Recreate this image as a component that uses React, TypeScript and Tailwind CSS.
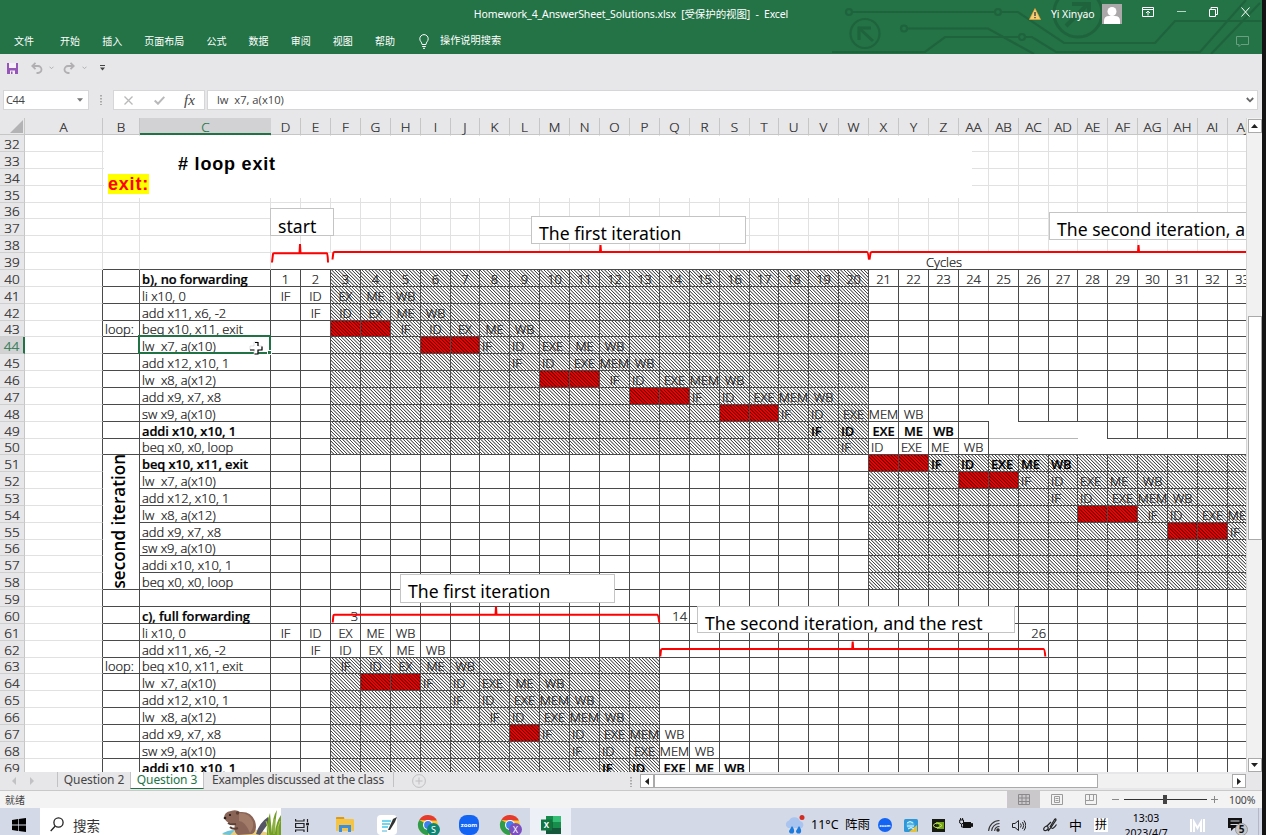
import React from "react";

type Align = "l" | "c" | "r";
type Entry = [col: string, text: string, align: Align];

const COLS = [
  "A","B","C","D","E","F","G","H","I","J","K","L","M","N","O","P","Q","R","S","T","U","V","W","X","Y","Z",
  "AA","AB","AC","AD","AE","AF","AG","AH","AI","AJ",
];
const FIRST_ROW = 32;
const LAST_ROW = 69;

const edges = [0, 25, 103, 140, 271];
for (let n = 1; n <= 33; n++) edges.push(Math.floor(270.6 + 29.9 * n) + 1);
const colTracks = edges.slice(1).map((e, i) => `${e - edges[i]}px`).join(" ");
const rowEdges: number[] = [];
for (let k = 0; k <= LAST_ROW - FIRST_ROW + 1; k++) rowEdges.push(Math.floor(134.7 + 16.85 * k) + 1);
const rowTracks = ["17px", ...rowEdges.slice(1).map((e, i) => `${e - rowEdges[i]}px`)].join(" ");

const ci = (c: string) => COLS.indexOf(c) + 2;
const ri = (r: number) => r - FIRST_ROW + 2;

const seq = (start: string, spec: string): Entry[] => {
  const s = COLS.indexOf(start);
  return spec.split(" ").map((p, i) => {
    const [t, a] = p.split("/");
    return [COLS[s + i], t, (a || "c") as Align];
  });
};

const rows: Record<number, Entry[]> = {
  39: [["Z", "Cycles", "c"]],
  40: Array.from({ length: 33 }, (_, i) => [COLS[i + 3], String(i + 1), "c"] as Entry),
  41: seq("D", "IF ID EX ME WB"),
  42: seq("E", "IF ID EX ME WB"),
  43: seq("H", "IF ID EX ME WB"),
  44: seq("K", "IF/l ID/l EXE/l ME WB"),
  45: seq("L", "IF/l ID/l EXE MEM WB"),
  46: seq("O", "IF ID/l EXE MEM WB"),
  47: seq("R", "IF/l ID/l EXE MEM WB"),
  48: seq("U", "IF/l ID/l EXE MEM WB"),
  49: seq("V", "IF/l ID/l EXE ME WB"),
  50: seq("W", "IF/l ID/l EXE/l ME/l WB"),
  51: seq("Z", "IF/l ID/l EXE/l ME/l WB/l"),
  52: seq("AC", "IF/l ID/l EXE/l ME/l WB"),
  53: seq("AD", "IF/l ID/l EXE MEM WB"),
  54: seq("AG", "IF ID/l EXE MEM"),
  55: seq("AJ", "IF/l"),
  60: [["F", "3", "r"], ["Q", "14", "r"]],
  61: [...seq("D", "IF ID EX ME WB"), ["AC", "26", "r"]],
  62: seq("E", "IF ID EX ME WB"),
  63: seq("F", "IF ID EX ME WB"),
  64: seq("I", "IF/l ID/l EXE/l ME WB"),
  65: seq("J", "IF/l ID/l EXE MEM WB"),
  66: seq("K", "IF ID/l EXE MEM WB"),
  67: seq("M", "IF/l ID/l EXE MEM WB"),
  68: seq("N", "IF/l ID/l EXE MEM WB"),
  69: seq("O", "IF/l ID/l EXE ME WB"),
};

const labels: Record<number, string> = {
  40: "b), no forwarding", 41: "li x10, 0", 42: "add x11, x6, -2", 43: "beq x10, x11, exit", 44: "lw  x7, a(x10)",
  45: "add x12, x10, 1", 46: "lw  x8, a(x12)", 47: "add x9, x7, x8", 48: "sw x9, a(x10)", 49: "addi x10, x10, 1",
  50: "beq x0, x0, loop", 51: "beq x10, x11, exit", 52: "lw  x7, a(x10)", 53: "add x12, x10, 1", 54: "lw  x8, a(x12)",
  55: "add x9, x7, x8", 56: "sw x9, a(x10)", 57: "addi x10, x10, 1", 58: "beq x0, x0, loop", 60: "c), full forwarding",
  61: "li x10, 0", 62: "add x11, x6, -2", 63: "beq x10, x11, exit", 64: "lw  x7, a(x10)", 65: "add x12, x10, 1",
  66: "lw  x8, a(x12)", 67: "add x9, x7, x8", 68: "sw x9, a(x10)", 69: "addi x10, x10, 1",
};
const BOLD_LABELS = [40, 49, 51, 60, 69];
const BOLD_STAGES = [49, 51, 69];

const hatches: [string, number, string, number][] = [
  ["F", 40, "W", 50],
  ["X", 51, "AJ", 58],
  ["F", 63, "P", 69],
];
const stalls: [string, string, number][] = [
  ["F", "G", 43], ["I", "J", 44], ["M", "N", 46], ["P", "Q", 47], ["S", "T", 48], ["X", "Y", 51],
  ["AA", "AB", 52], ["AE", "AF", 54], ["AH", "AI", 55], ["G", "H", 64], ["L", "L", 67],
];

function area(c1: string, r1: number, c2 = c1, r2 = r1): React.CSSProperties {
  return { gridColumn: `${ci(c1)} / ${ci(c2) + 1}`, gridRow: `${ri(r1)} / ${ri(r2) + 1}` };
}

function borderClass(col: string, r: number): string {
  const c = COLS.indexOf(col);
  const light = "border-[#e1e1e1]";
  if (col === "A") return `border-b border-r border-b-[#e1e1e1] ${r >= 40 ? "border-r-[#4a4a4a]" : "border-r-[#e1e1e1]"}`;
  if (r < 39) return `border-b border-r ${light}`;
  if (r === 39) return `border-b border-b-[#4a4a4a] ${c < 3 ? "border-r border-r-[#e1e1e1]" : ""}`;
  if (col === "B" && r >= 51 && r <= 57) return "border-r border-r-[#4a4a4a]";
  const dark = "border-[#4a4a4a]";
  if (r === 48 && col === "AA") return `border-b ${dark}`;
  if (r === 48 && col === "AB") return `border-r ${dark}`;
  if (r === 49 && c >= COLS.indexOf("AB") && c <= COLS.indexOf("AD")) return "border-b border-b-[#b5b5b5]";
  if (r === 49 && col === "AE") return `border-r ${dark}`;
  if (r === 50 && c > COLS.indexOf("AA")) return `border-b ${dark}`;
  return `border-b border-r ${dark}`;
}

const justify: Record<Align, string> = {
  l: "justify-start pl-[2px]",
  c: "justify-center",
  r: "justify-end pr-[2px]",
};

function Sheet() {
  const items: React.ReactNode[] = [];
  for (let r = FIRST_ROW; r <= LAST_ROW; r++) {
    const sel = r === 44;
    items.push(
      <div
        key={`h${r}`}
        style={{ gridColumn: 1, gridRow: ri(r) }}
        className={`flex items-end justify-center border-b border-r border-b-[#cfcfcf] text-[13.5px] leading-[13px] ${sel ? "border-r-2 border-r-[#217346] bg-[#d2d1d3] text-[#217346]" : "border-r-[#c6c6c6] bg-[#e7e6e8] text-[#222]"}`}
      >
        {r}
      </div>,
    );
    for (const col of COLS) {
      let text = "";
      let align: Align = "l";
      if (col === "C") text = labels[r] || "";
      if (col === "B" && (r === 43 || r === 63)) text = "loop:";
      const e = rows[r]?.find((x) => x[0] === col);
      if (e) {
        text = e[1];
        align = e[2];
      }
      const bold = (col === "C" && BOLD_LABELS.includes(r)) || (e && BOLD_STAGES.includes(r));
      items.push(
        <div
          key={`${col}${r}`}
          style={area(col, r)}
          className={`flex min-w-0 items-end whitespace-pre leading-[13px] ${borderClass(col, r)} ${justify[align]} ${bold ? "font-semibold tracking-[-0.08px] text-black" : "text-[#111]"}`}
        >
          {text}
        </div>,
      );
    }
  }
  return (
    <div className="relative h-[654px] w-[1246px] overflow-hidden bg-white font-['Open_Sans','Noto_Sans',sans-serif] text-[12.9px] font-light">
      <div className="grid w-max [-webkit-text-stroke:0.22px]" style={{ gridTemplateColumns: colTracks, gridTemplateRows: rowTracks }}>
        <div className="flex items-end justify-end border-b border-r border-[#c6c6c6] bg-[#e7e6e8] pb-[1px] pr-[1px]" style={{ gridColumn: 1, gridRow: 1 }}>
          <svg width="13" height="13" viewBox="0 0 13 13"><path d="M13 0V13H0Z" fill="#b3b3b5" /></svg>
        </div>
        {COLS.map((c) => (
          <div
            key={c}
            style={{ gridColumn: ci(c), gridRow: 1 }}
            className={`flex items-end justify-center whitespace-nowrap text-[13.5px] ${c === "C" ? "border-b-2 border-[#217346] bg-[#d2d1d3] leading-[12px] text-[#217346]" : "border-b border-r border-[#c6c6c6] bg-[#e7e6e8] leading-[14px] text-[#222]"}`}
          >
            {c}
          </div>
        ))}
        {hatches.map(([a, b, c, d]) => (
          <div
            key={a + b}
            style={area(a, b, c, d)}
            className="bg-[repeating-linear-gradient(45deg,#484848_0px,#484848_0.3px,#fff_0.85px,#fff_1.85px,#484848_2.383px)] bg-fixed"
          />
        ))}
        {stalls.map(([a, b, r]) => (
          <div
            key={a + r}
            style={area(a, r, b)}
            className="bg-[repeating-linear-gradient(45deg,#5a0000_0px,#5a0000_0.4px,#f40000_0.9px,#f40000_1.85px,#5a0000_2.383px)] bg-fixed"
          />
        ))}
        {items}
        <div style={area("B", 51, "B", 58)} className="flex items-center justify-center overflow-hidden pb-[2px] pr-[5px] [-webkit-text-stroke:0px]">
          <span className="rotate-180 whitespace-nowrap text-[17.1px] font-semibold leading-none text-black [writing-mode:vertical-rl]">second iteration</span>
        </div>
        <div style={area("C", 44)} className="relative -ml-[2px] -mt-[2px] border-2 border-[#217346]">
          <span className="absolute -bottom-[3px] -right-[3px] size-[5px] border border-white bg-[#217346]" />
          <svg className="absolute right-[6px] top-[4px]" width="14" height="14" viewBox="0 0 14 14">
            <path d="M5 1h4v4h4v4H9v4H5V9H1V5h4Z" fill="#fff" stroke="#ccc" strokeWidth="0.6" />
            <path d="M1 9H5.500M5.500 13H9V9H13V5.500M9 5V1.500H6" fill="none" stroke="#000" strokeWidth="1.2" />
          </svg>
        </div>
      </div>

      <div className="absolute left-[104px] top-[18px] flex h-[62px] w-[868px] flex-col items-start bg-white font-['Liberation_Sans',sans-serif] text-[18px] font-bold tracking-[0.8px] text-black">
        <span className="ml-[74px] mt-[18px] leading-[20px]"># loop exit</span>
        <span className="ml-[4px] bg-[#ffff00] leading-[20px] text-[#ff0000]">exit:</span>
      </div>
      <Note className="left-[270px] top-[90px] h-[28px] w-[64px] pt-[6px]">start</Note>
      <Note className="left-[531px] top-[98px] h-[28px] w-[215px] pt-[5px]">The first iteration</Note>
      <Note className="left-[1049px] top-[94px] h-[28px] w-[320px] pt-[5px]">The second iteration, and the rest</Note>
      <Note className="left-[400px] top-[456px] h-[29px] w-[215px] pt-[5px]">The first iteration</Note>
      <Note className="left-[697px] top-[488px] h-[27px] w-[318px] pt-[5px]">The second iteration, and the rest</Note>
      <svg className="absolute left-0 top-0" width="1246" height="654" viewBox="0 118 1246 654" fill="none" stroke="#ff0000" strokeWidth="2">
        <path d="M272 262.500L273 254Q273 253.300 274 253.300H299.500L300 244L300.500 253.300H327Q327.700 253.500 328 262.500" />
        <path d="M332.500 259.500L333.300 253Q333.500 252 334.500 252H600L600.500 245L601 252H867Q868 252 869 259.500" />
        <path d="M869.500 259.500L870.500 253Q870.700 252 872 252H1138L1138.500 245L1139 252H1260" />
        <path d="M332.700 622.500L333.400 615.500Q333.500 614.700 334.500 614.700H495.500L496 606.500L496.500 614.700H657.500Q658.300 614.700 659.300 622.500" />
        <path d="M660.300 656.500L661 650Q661.300 649 662.300 649H852.200L852.700 641.500L853.200 649H1043.500Q1044.700 649 1045.300 656.500" />
      </svg>
    </div>
  );
}

function Note({ className, children }: { className: string; children: React.ReactNode }) {
  return (
    <div className={`absolute overflow-hidden whitespace-nowrap border border-[#c4c4c4] bg-white pl-[7px] font-['Noto_Sans',sans-serif] text-[17.6px] font-normal leading-[22px] text-black ${className}`}>
      {children}
    </div>
  );
}

const TABS = ["开始", "插入", "页面布局", "公式", "数据", "审阅", "视图", "帮助"];

function Header() {
  return (
    <header className="relative h-[54px] bg-[#237346] text-white">
      <svg className="absolute right-0 top-0" width="430" height="54" viewBox="832 0 430 54" fill="none" stroke="#1f633d" strokeWidth="2.2">
        <circle cx="849" cy="12" r="3" /><path d="M852 12H995" /><circle cx="998" cy="12" r="3" />
        <path d="M1001 12H1018L1064 43H1155L1175 21H1262" />
        <circle cx="865" cy="33.500" r="14.500" /><path d="M859 40V28H871M860 29L873 41" strokeWidth="3" />
        <circle cx="904" cy="28.500" r="3" /><path d="M907 28.500H988L1034 54" />
        <path d="M832 52H925L945 37H1019M1025 37H1032L1056 52H1200L1246 0" /><circle cx="1022" cy="37" r="3" />
        <circle cx="1078" cy="13" r="24" strokeWidth="3" /><path d="M1066 26L1088 4M1072 4H1089V20" strokeWidth="4" />
        <path d="M1211 54L1260 3" />
      </svg>
      <div className="relative flex h-[28px] items-center">
        <div className="flex-1 pl-[12px]" />
        <div className="whitespace-pre pt-[1px] font-['Noto_Sans','Noto_Sans_CJK_SC',sans-serif] text-[10.5px] tracking-[-0.11px]">Homework_4_AnswerSheet_Solutions.xlsx  [受保护的视图]  -  Excel</div>
        <div className="flex flex-1 items-center justify-end pr-[12px]">
          <svg width="12" height="12" viewBox="0 0 12 12"><path d="M6 .5L11.600 11.500H.4Z" fill="#f7cf72" stroke="#e9a33b" strokeWidth=".7" /><path d="M6 4V8M6 9V10.300" stroke="#333" strokeWidth="1.300" /></svg>
          <span className="ml-[10px] w-[44px] whitespace-nowrap pt-[1px] font-['Noto_Sans',sans-serif] text-[10.5px] tracking-[-0.1px]">Yi Xinyao</span>
          <svg className="ml-[7px]" width="20" height="20" viewBox="0 0 20 20"><path d="M0 0H20V20H0Z" fill="#aaa8a9" /><circle cx="10" cy="7.500" r="4.500" fill="#fff" /><path d="M2 20V17Q2 12 7 12H13Q18 12 18 17V20Z" fill="#fff" /></svg>
          <svg className="-mt-[5px] ml-[20px]" width="12" height="10" viewBox="0 0 12 10" fill="none" stroke="#fff"><path d="M.5.5H11.500V9.500H.5ZM.5 2.500H11.500M6 8.500V4M4 6L6 4L8 6" /></svg>
          <svg className="-mt-[7px] ml-[23px]" width="9" height="10" viewBox="0 0 9 10" stroke="#b9d5c5"><path d="M0 5.500H9" /></svg>
          <svg className="-mt-[5px] ml-[23px]" width="9" height="10" viewBox="0 0 9 10" fill="none" stroke="#fff"><path d="M.5 2.500H6.500V9.500H.5ZM2 2V.5H8.500V7.500H7" /></svg>
          <svg className="-mt-[5px] ml-[23px]" width="9" height="10" viewBox="0 0 9 10" fill="none" stroke="#fff"><path d="M.5.5L8.500 9.500M8.500.5L.5 9.500" /></svg>
        </div>
      </div>
      <div className="relative flex h-[26px] items-center pb-[2px] pl-[14px] pr-[13px] font-['Noto_Sans_CJK_SC',sans-serif] text-[10px]">
        <span className="mr-[26px]">文件</span>
        <nav className="flex gap-[22.15px]">{TABS.map((t) => <span key={t}>{t}</span>)}</nav>
        <svg className="ml-[24px] mr-[11px] mt-[2px]" width="10" height="15" viewBox="0 0 10 15" fill="none" stroke="#fff"><path d="M3 10.500C3 8 .8 7.500.8 4.800A4.200 4.200 0 0 1 9.200 4.800C9.200 7.500 7 8 7 10.500ZM3.200 12.500H6.800M4 14.300H6" /></svg>
        <span className="text-[10.2px]">操作说明搜索</span>
        <svg className="ml-auto mt-[2px]" width="13" height="11" viewBox="0 0 13 11" fill="none" stroke="#6a9f80"><path d="M.5.5H12.500V8.500H5L3 10.500V8.500H.5Z" /></svg>
      </div>
    </header>
  );
}

function QuickAccess() {
  return (
    <div className="flex h-[36px] items-center pb-[8px] pl-[7px]">
      <svg width="11" height="11" viewBox="0 0 11 11"><path d="M0 0H11V11H0Z" fill="#9457b8" /><path d="M2 0H9V5H2Z" fill="#f4effa" /><path d="M3 7.500H8V11H3Z" fill="#f4effa" /><path d="M4 8.500H5.500V11H4Z" fill="#9457b8" /></svg>
      <svg className="ml-[13px]" width="12" height="12" viewBox="0 0 12 12" fill="none" stroke="#b1afb2" strokeWidth="1.800"><path d="M4.500.8L1.200 4L4.500 7.200M1.200 4H7A3.500 3.500 0 0 1 7 11H5.500" /></svg>
      <Chevron className="ml-[6px]" />
      <svg className="ml-[9px]" width="12" height="12" viewBox="0 0 12 12" fill="none" stroke="#b1afb2" strokeWidth="1.800"><path d="M7.500.8L10.800 4L7.500 7.200M10.800 4H5A3.500 3.500 0 0 0 5 11H6.500" /></svg>
      <Chevron className="ml-[7px]" />
      <svg className="ml-[13px]" width="5" height="6" viewBox="0 0 5 6"><path d="M0 .5H5" stroke="#444" /><path d="M0 2.500H5L2.500 5.500Z" fill="#444" /></svg>
    </div>
  );
}

function Chevron({ className }: { className: string }) {
  return <svg className={className} width="5" height="4" viewBox="0 0 5 4" fill="none" stroke="#b1afb2"><path d="M.5.7L2.500 2.700L4.500.7" /></svg>;
}

function FormulaBar() {
  return (
    <div className="flex h-[28px] items-start pl-[3px] font-['Open_Sans','Noto_Sans',sans-serif] text-[11px] text-[#444]">
      <div className="flex h-[20px] w-[86px] items-center justify-between border border-[#d6d5d7] bg-white pl-[2px] pr-[5px]">
        <span className="text-[11px] tracking-[-0.4px]">C44</span>
        <svg width="6" height="4" viewBox="0 0 6 4"><path d="M0 .3H6L3 3.700Z" fill="#777" /></svg>
      </div>
      <svg className="ml-[11px] mt-[5px]" width="2" height="10" viewBox="0 0 2 10" fill="#aaa"><path d="M0 0H2V1.500H0ZM0 3H2V4.500H0ZM0 6H2V7.500H0ZM0 9H2V10H0Z" /></svg>
      <div className="ml-[11px] flex h-[20px] w-[92px] items-center border border-[#d6d5d7] bg-white pl-[10px]">
        <svg width="9" height="9" viewBox="0 0 9 9" stroke="#b9b8ba" strokeWidth="1.300"><path d="M.5.5L8.500 8.500M8.500.5L.5 8.500" /></svg>
        <svg className="ml-[21px]" width="11" height="9" viewBox="0 0 11 9" fill="none" stroke="#b9b8ba" strokeWidth="2"><path d="M.7 4.500L4 7.700L10.300.8" /></svg>
        <span className="ml-[19px] font-['Liberation_Serif',serif] text-[15px] italic leading-none">fx</span>
      </div>
      <div className="ml-[2px] flex h-[20px] w-[1051px] items-center justify-between border border-[#d6d5d7] bg-white pl-[9px] pr-[3px]">
        <span className="whitespace-pre text-[11.2px]">lw  x7, a(x10)</span>
        <svg width="8" height="6" viewBox="0 0 8 6" fill="none" stroke="#666" strokeWidth="1.800"><path d="M.8 1L4 4.300L7.200 1" /></svg>
      </div>
    </div>
  );
}

function VScroll() {
  return (
    <div className="flex h-[654px] w-[16px] flex-col items-center border-l border-[#d5d5d5] bg-[#f1f1f1] pt-[1px]">
      <div className="flex h-[14px] w-[14px] items-center justify-center border border-[#aaa] bg-white"><svg width="7" height="4" viewBox="0 0 7 4"><path d="M0 4L3.500 0L7 4Z" fill="#222" /></svg></div>
      <div className="mt-[183px] h-[224px] w-[14px] border border-[#aaa] bg-white" />
      <div className="mt-auto flex h-[14px] w-[14px] items-center justify-center border border-[#aaa] bg-white"><svg width="7" height="4" viewBox="0 0 7 4"><path d="M0 0L3.500 4L7 0Z" fill="#222" /></svg></div>
    </div>
  );
}

function SheetTabs() {
  return (
    <div className="flex h-[19px] items-start border-b border-[#c9c9c9] font-['Noto_Sans',sans-serif] text-[12px] leading-[16px] text-[#444]">
      <svg className="ml-[12px] mt-[5px]" width="22" height="8" viewBox="0 0 22 8" fill="#c2c1c3"><path d="M4 0V8L0 4ZM18 0V8L22 4Z" /></svg>
      <span className="ml-[23px] h-[15px] w-px bg-[#c2c1c3]" />
      <span className="w-[72px] text-center tracking-[-0.1px]">Question 2</span>
      <span className="h-[17px] w-[74px] border-b border-l border-r border-b-[#217346] border-l-[#c2c1c3] border-r-[#c2c1c3] bg-white text-center tracking-[-0.1px] text-[#217346]">Question 3</span>
      <span className="w-[189px] whitespace-nowrap pl-[8px] tracking-[-0.2px]">Examples discussed at the class</span>
      <span className="h-[15px] w-px bg-[#c2c1c3]" />
      <svg className="ml-[18px] mt-[2px]" width="14" height="14" viewBox="0 0 14 14" fill="none" stroke="#c0bfc1"><circle cx="7" cy="7" r="6.400" /><path d="M7 3.500V10.500M3.500 7H10.500" /></svg>
      <svg className="ml-[204px] mt-[5px]" width="2" height="10" viewBox="0 0 2 10" fill="#aaa"><path d="M0 0H2V1.500H0ZM0 3H2V4.500H0ZM0 6H2V7.500H0ZM0 9H2V10H0Z" /></svg>
      <div className="ml-[8px] mt-[2px] flex h-[14px] w-[606px] bg-[#f1f1f1]">
        <div className="flex w-[14px] items-center justify-center border border-[#aaa] bg-white"><svg width="4" height="7" viewBox="0 0 4 7"><path d="M4 0V7L0 3.500Z" fill="#222" /></svg></div>
        <div className="w-[444px] border border-[#aaa] bg-white" />
        <div className="ml-auto flex w-[14px] items-center justify-center border border-[#aaa] bg-white"><svg width="4" height="7" viewBox="0 0 4 7"><path d="M0 0V7L4 3.500Z" fill="#222" /></svg></div>
      </div>
    </div>
  );
}

function StatusBar() {
  return (
    <div className="flex h-[17px] items-center bg-[#f3f3f3] pl-[5px] pr-[6px] font-['Noto_Sans','Noto_Sans_CJK_SC',sans-serif] text-[10px] leading-[16px] text-[#444]">
      <span>就绪</span>
      <div className="ml-auto flex h-full w-[33px] items-center justify-center bg-[#cac8cb]"><svg width="12" height="11" viewBox="0 0 12 11" fill="none" stroke="#8b898c"><path d="M.5.5H11.500V10.500H.5ZM.5 4H11.500M.5 7.500H11.500M4 .5V10.500M8 .5V10.500" /></svg></div>
      <svg className="ml-[11px]" width="12" height="11" viewBox="0 0 12 11" fill="none" stroke="#9b9b9b"><path d="M.5.5H11.500V10.500H.5ZM3.500 2.500H8.500V8.500H3.500ZM4.500 4.500H7.500M4.500 6.500H7.500" /></svg>
      <svg className="ml-[22px]" width="12" height="11" viewBox="0 0 12 11" fill="none" stroke="#9b9b9b"><path d="M.5.5H11.500V10.500H.5ZM4.500.5V6.500H.5M4.500 6.500H8.500V.5" /></svg>
      <svg className="ml-[15px]" width="107" height="11" viewBox="0 0 107 11"><path d="M0 5.500H7M99 5.500H106M102.500 2V9" stroke="#888" /><path d="M12 5.500H95" stroke="#333" /><path d="M51 1H55V10H51Z" fill="#444" /></svg>
      <span className="ml-[10px] w-[27px] whitespace-nowrap text-[10.5px] tracking-[-0.1px]">100%</span>
    </div>
  );
}

function ChromeIcon({ letter, color }: { letter: string; color: string }) {
  return (
    <svg width="24" height="24" viewBox="0 0 24 24">
      <circle cx="11" cy="11" r="10" fill="#fbc52d" />
      <path d="M11 11L2.300 6A10 10 0 0 0 11 21Z" fill="#2e9c4b" />
      <path d="M2.300 6A10 10 0 0 1 20 6.500H11Z" fill="#e53b2e" />
      <circle cx="11" cy="11" r="5" fill="#fff" /><circle cx="11" cy="11" r="3.900" fill="#3f7ff0" />
      <circle cx="16.500" cy="15.500" r="6.500" fill={color} />
      <text x="16.500" y="18.800" textAnchor="middle" fontSize="9" fill="#fff" fontFamily="Noto Sans, sans-serif">{letter}</text>
    </svg>
  );
}

function Taskbar() {
  return (
    <div className="flex h-[27px] items-start overflow-hidden bg-[#d4d9e8] font-['Noto_Sans','Noto_Sans_CJK_SC',sans-serif] text-black [&>svg]:shrink-0">
      <svg className="ml-[12px] mt-[10px]" width="14" height="14" viewBox="0 0 14 14"><path d="M0 2L6 1V6.600H0ZM6.700.9L14 0V6.600H6.700ZM0 7.400H6V13L0 12ZM6.700 7.400H14V14L6.700 13.100Z" /></svg>
      <div className="ml-[14px] flex h-[27px] w-[241px] shrink-0 items-start bg-white pl-[10px]">
        <svg className="mt-[9px]" width="14" height="15" viewBox="0 0 14 15" fill="none" stroke="#222" strokeWidth="1.300"><circle cx="8.500" cy="5.500" r="4.600" /><path d="M5.300 9L.7 14" /></svg>
        <span className="ml-[9px] mt-[8px] text-[13.5px] leading-[20px] text-[#333]">搜索</span>
        <svg className="ml-auto mt-[1px]" width="59" height="26" viewBox="0 0 59 26">
          <path d="M0 26Q6 22 18 20Q36 19 50 26Z" fill="#e9cf83" /><path d="M0 25Q5 21 13 21L8 26Z" fill="#6cc4da" />
          <path d="M2 9Q2 3 9 2Q14 0 18 3Q29 2 33 12Q36 22 30 25L16 26Q11 23 13 15Q6 16 2 9Z" fill="#8a6557" />
          <path d="M17 4Q28 4 31 13Q32 19 28 24Q23 12 17 12Z" fill="#a27b69" /><circle cx="8" cy="6" r="1.100" fill="#201512" /><circle cx="15.500" cy="4" r="1.700" fill="#5e4036" /><circle cx="3" cy="9" r="1.300" fill="#2a1b17" />
          <path d="M14 15Q9 16 6 14M16 19Q11 21 8 18" stroke="#5e4036" strokeWidth="2" fill="none" />
          <path d="M34 25Q37 14 46 8Q49 12 43 19L38 26Z" fill="#555566" />
          <path d="M45 26Q44 14 48 4Q49 15 50 24Q50 8 55 1Q53 12 53 24Q54 13 59 6V26Z" fill="#739c2c" /><path d="M47 26Q46 17 44 12M52 25V10M56 26Q55 17 58 12" stroke="#a8c846" fill="none" />
        </svg>
      </div>
      <svg className="ml-[14px] mt-[11px]" width="14" height="13" viewBox="0 0 14 13" fill="none" stroke="#222" strokeWidth="1.200"><path d="M.6 0V2H9V0M.6 4.500H9V8.500H.6ZM.6 13V11H9V13M12.500 0V3M12.500 7V13" /><circle cx="12.500" cy="5" r="1" fill="#222" /></svg>
      <svg className="ml-[27px] mt-[9px]" width="18" height="16" viewBox="0 0 18 16"><path d="M0 1Q0 0 1 0H8L9 2H17Q18 2 18 3V14H0Z" fill="#f6c445" /><path d="M0 1Q0 0 1 0H8V2H0Z" fill="#d99a1d" /><path d="M3 8H15V15H12V11H6V15H3Z" fill="#3c8fdf" /></svg>
      <svg className="ml-[23px] mt-[7px]" width="20" height="20" viewBox="0 0 20 20"><rect width="20" height="20" rx="4" fill="#fff" /><path d="M5 6H14M5 9H13M5 12H11" stroke="#44c6e8" strokeWidth="1.300" /><path d="M5 16H10" stroke="#4ab2da" /><path d="M11 15L16 4L20 2L18 7L13 15Z" fill="#333" /></svg>
      <div className="ml-[20px] mt-[6px] shrink-0"><ChromeIcon letter="S" color="#0e8575" /></div>
      <svg className="ml-[18px] mt-[7px]" width="20" height="20" viewBox="0 0 20 20"><rect width="20" height="20" rx="8" fill="#1464f4" /><text x="10" y="12" textAnchor="middle" fontSize="6" fontWeight="bold" fill="#fff" fontFamily="Noto Sans, sans-serif">zoom</text></svg>
      <div className="ml-[20px] mt-[6px] shrink-0"><ChromeIcon letter="X" color="#7b4fc0" /></div>
      <div className="ml-[7px] flex h-[27px] w-[41px] shrink-0 justify-center bg-[#eef0f7] pt-[7px]">
        <svg width="20" height="20" viewBox="0 0 20 20"><path d="M5 1H12V19H5Z" fill="#158a4a" /><path d="M12 1H20V7H12Z" fill="#35bd76" /><path d="M12 7H20V13H12Z" fill="#188e4d" /><path d="M5 7H12V13H5Z" fill="#126d3b" /><path d="M5 13H20V19H5Z" fill="#15573a" /><path d="M0 4.500H11V15.500H0Z" fill="#107540" /><text x="5.500" y="13" textAnchor="middle" fontSize="8" fontWeight="bold" fill="#fff" fontFamily="Noto Sans, sans-serif">X</text></svg>
      </div>
      <svg className="ml-[214px] mt-[7px]" width="20" height="20" viewBox="0 0 20 20"><path d="M3 13A4 4 0 0 1 4 5.500A6 6 0 0 1 15 6A4 4 0 0 1 17 13Z" fill="#a9c4ee" /><path d="M7 11Q11 16 8 18.500Q4 19 4 16ZM14 11Q18 16 15 18.500Q11 19 11 16Z" fill="#1b7be0" /><circle cx="17" cy="2.500" r="2.500" fill="#d12d22" /></svg>
      <span className="ml-[6px] mt-[7px] w-[60px] shrink-0 whitespace-nowrap text-[12.5px] leading-[20px]">11°C&nbsp; 阵雨</span>
      <svg className="ml-[7px] mt-[10px]" width="14" height="14" viewBox="0 0 14 14"><circle cx="7" cy="7" r="7" fill="#1464f4" /><text x="7" y="8.500" textAnchor="middle" fontSize="4" fontWeight="bold" fill="#fff" fontFamily="Noto Sans, sans-serif">zoom</text></svg>
      <svg className="ml-[12px] mt-[11px]" width="14" height="13" viewBox="0 0 14 13"><rect width="14" height="13" rx="1.500" fill="#2f97d8" /><path d="M13 6V13H5Z" fill="#e6c23c" /><circle cx="6.500" cy="6" r="4" fill="#4fb6ea" /><path d="M3 4Q6 1 9 4M3 7H10M4 10Q7 7 10 10" stroke="#e8f6fd" fill="none" /></svg>
      <svg className="ml-[14px] mt-[11px]" width="13" height="13" viewBox="0 0 13 13"><path d="M0 0H13V13H0Z" fill="#171a10" /><path d="M4 3H12V10H5Z" fill="#76a51a" /><path d="M1 6.500Q5 1.500 10 6.500Q5 11 1 6.500Z" fill="none" stroke="#c5e36b" /><circle cx="5.500" cy="6.500" r="1.500" fill="#22300a" /></svg>
      <svg className="ml-[14px] mt-[10px]" width="14" height="12" viewBox="0 0 14 12"><path d="M4 4H12V10H4Z" fill="#111" /><path d="M12.500 5.500H13.500V8.500H12.500Z" fill="#111" stroke="#111" /><path d="M.7 2H4.500V5Q2.600 7 .7 5ZM1.600 0V2M3.600 0V2M2.600 6V9H5" fill="none" stroke="#111" /></svg>
      <svg className="ml-[15px] mt-[11px]" width="12" height="13" viewBox="0 0 12 13" fill="none" stroke="#333" strokeWidth="1.100"><path d="M.6 12A11 11 0 0 1 11.500 1.500M3.600 12A8 8 0 0 1 11.500 4.500M6.600 12A5 5 0 0 1 11.500 7.500" /><circle cx="10" cy="11" r="1.200" fill="#222" /></svg>
      <svg className="ml-[12px] mt-[11px]" width="14" height="13" viewBox="0 0 14 13" fill="none" stroke="#222"><path d="M.5 4.500H3L6.500 1.500V11.500L3 8.500H.5ZM8.500 4.500Q10 6.500 8.500 8.500M10.500 3Q13 6.500 10.500 10M12 1.500Q15.500 6.500 12 11.500" /></svg>
      <svg className="ml-[17px] mt-[10px]" width="14" height="14" viewBox="0 0 14 14" fill="none" stroke="#222" strokeWidth="1.200"><path d="M7 9L11.500 1.500Q13 0 13 2L8 9.500L5 13M1 10Q3 7 5 9Q6 11 3 12.500Q0 13 1 10ZM8 9.500Q10 12 13.500 6.500M4 8L8 4" /></svg>
      <span className="ml-[12px] mt-[7px] shrink-0 text-[13px] leading-[20px]">中</span>
      <span className="ml-[12px] mt-[10px] flex size-[14px] shrink-0 items-center justify-center bg-white text-[12px] leading-[14px]">拼</span>
      <div className="ml-[14px] mt-[3px] flex w-[48px] shrink-0 flex-col items-center whitespace-nowrap text-[10.5px] leading-[14.5px] tracking-[-0.1px]"><span>13:03</span><span>2023/4/7</span></div>
      <svg className="ml-[20px] mt-[11px]" width="15" height="13" viewBox="0 0 15 13" fill="none" stroke="#fff" strokeWidth="2"><path d="M1 0V13M14 0V13M4 13V3L7.500 9L11 3V13" /></svg>
      <svg className="ml-[23px] mt-[9px]" width="21" height="19" viewBox="0 0 21 19"><path d="M0 1H14V11H6L3 14V11H0Z" fill="#111" /><path d="M2.500 4H11.500M2.500 7.500H11.500" stroke="#d4d9e8" /><circle cx="13.500" cy="12.500" r="6" fill="#c5c7cc" stroke="#999" /><text x="13.500" y="16.300" textAnchor="middle" fontSize="10" fontWeight="bold" fill="#111" fontFamily="Noto Sans, sans-serif">5</text></svg>
      <span className="ml-auto mr-[3px] h-[27px] w-px bg-[#b3b8c4]" />
    </div>
  );
}

export default function App() {
  return (
    <div className="flex h-[835px] w-[1266px] overflow-hidden bg-[#141414]">
      <main className="flex w-[1262px] shrink-0 flex-col bg-[#e7e6e8]">
        <Header />
        <QuickAccess />
        <FormulaBar />
        <div className="flex">
          <Sheet />
          <VScroll />
        </div>
        <SheetTabs />
        <StatusBar />
        <Taskbar />
      </main>
    </div>
  );
}
